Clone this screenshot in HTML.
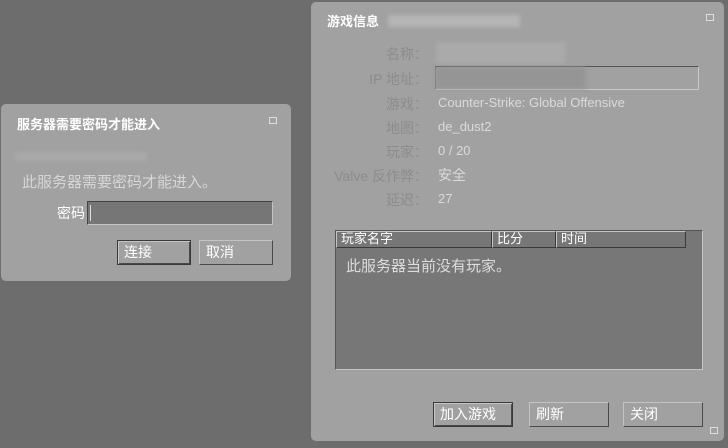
<!DOCTYPE html>
<html><head><meta charset="utf-8"><style>
*{margin:0;padding:0;box-sizing:border-box}
body{width:728px;height:448px;background:#6d6d6d;position:relative;overflow:hidden;font-family:"Liberation Sans","Noto Sans CJK SC",sans-serif}
.p{position:absolute;background:#a1a1a1;border-radius:5px}
.a{position:absolute;white-space:nowrap}
.t{color:#fff;font-weight:bold;font-size:13px}
.btn{position:absolute;height:25px;border:1px solid;border-color:#c4c4c4 #4a4a4a #4a4a4a #c4c4c4;color:#fff;font-size:14px;line-height:22px;padding-left:6px;background:#a1a1a1}
.btn.d{border-color:#3a3a3a #3a3a3a #3a3a3a #3a3a3a;box-shadow:inset 1px 1px 0 #c4c4c4,inset -1px -1px 0 #4a4a4a}
.lb{position:absolute;right:300px;color:#8c8c8c;font-size:14px;white-space:nowrap;text-align:right}
.v{position:absolute;left:438px;color:#dadada;font-size:13px;white-space:nowrap}
.bl{position:absolute;background:#b5b5b5;filter:blur(2px)}
.mx{position:absolute;width:8px;height:7px;border:1px solid #ddd}
</style></head><body>
<div class="p" style="left:1px;top:104px;width:290px;height:177px"></div>
<div class="a t" style="left:17px;top:114px">服务器需要密码才能进入</div>
<div class="mx" style="left:269px;top:117px"></div>
<div class="bl" style="left:15px;top:152px;width:132px;height:9px;background:#a9a9a9"></div>
<div class="a" style="left:22px;top:171px;color:#d6d6d6;font-size:15px">此服务器需要密码才能进入。</div>
<div class="a" style="left:57px;top:203px;color:#fff;font-size:14px">密码</div>
<div class="a" style="left:87px;top:201px;width:186px;height:24px;background:#767676;border:1px solid;border-color:#444 #c4c4c4 #c4c4c4 #444"></div>
<div class="a" style="left:90px;top:205px;width:1px;height:16px;background:#ddd"></div>
<div class="btn d" style="left:117px;top:240px;width:74px">连接</div>
<div class="btn" style="left:199px;top:240px;width:74px">取消</div>

<div class="p" style="left:311px;top:2px;width:413px;height:439px"></div>
<div class="a t" style="left:327px;top:11px">游戏信息</div>
<div class="bl" style="left:388px;top:15px;width:132px;height:12px"></div>
<div class="mx" style="left:706px;top:14px"></div>
<div class="lb" style="top:44px">名称：</div>
<div class="bl" style="left:436px;top:42px;width:130px;height:22px;background:#aaa"></div>
<div class="lb" style="top:69px">IP 地址：</div>
<div class="a" style="left:435px;top:66px;width:264px;height:24px;border:1px solid;border-color:#555 #c8c8c8 #c8c8c8 #777"></div>
<div class="bl" style="left:436px;top:67px;width:150px;height:22px;background:#959595"></div>
<div class="lb" style="top:94px">游戏：</div><div class="v" style="top:95px">Counter-Strike: Global Offensive</div>
<div class="lb" style="top:118px">地图：</div><div class="v" style="top:119px">de_dust2</div>
<div class="lb" style="top:142px">玩家：</div><div class="v" style="top:143px">0 / 20</div>
<div class="lb" style="top:166px">Valve 反作弊：</div><div class="v" style="top:165px;font-size:14px">安全</div>
<div class="lb" style="top:190px">延迟：</div><div class="v" style="top:191px">27</div>

<div class="a" style="left:335px;top:230px;width:368px;height:140px;background:#777;border:1px solid;border-color:#555 #c4c4c4 #c4c4c4 #555"></div>
<div class="a" style="left:336px;top:231px;width:156px;height:17px;border:1px solid;border-color:#c4c4c4 #3a3a3a #3a3a3a #c4c4c4;color:#fff;font-size:13px;line-height:14px;padding-left:4px">玩家名字</div>
<div class="a" style="left:492px;top:231px;width:64px;height:17px;border:1px solid;border-color:#c4c4c4 #3a3a3a #3a3a3a #c4c4c4;color:#fff;font-size:13px;line-height:14px;padding-left:4px">比分</div>
<div class="a" style="left:556px;top:231px;width:130px;height:17px;border:1px solid;border-color:#c4c4c4 #3a3a3a #3a3a3a #c4c4c4;color:#fff;font-size:13px;line-height:14px;padding-left:4px">时间</div>
<div class="a" style="left:346px;top:255px;color:#dcdcdc;font-size:15px">此服务器当前没有玩家。</div>

<div class="btn d" style="left:433px;top:402px;width:80px">加入游戏</div>
<div class="btn" style="left:529px;top:402px;width:80px">刷新</div>
<div class="btn" style="left:623px;top:402px;width:80px">关闭</div>
<div class="mx" style="left:710px;top:427px"></div>
</body></html>
